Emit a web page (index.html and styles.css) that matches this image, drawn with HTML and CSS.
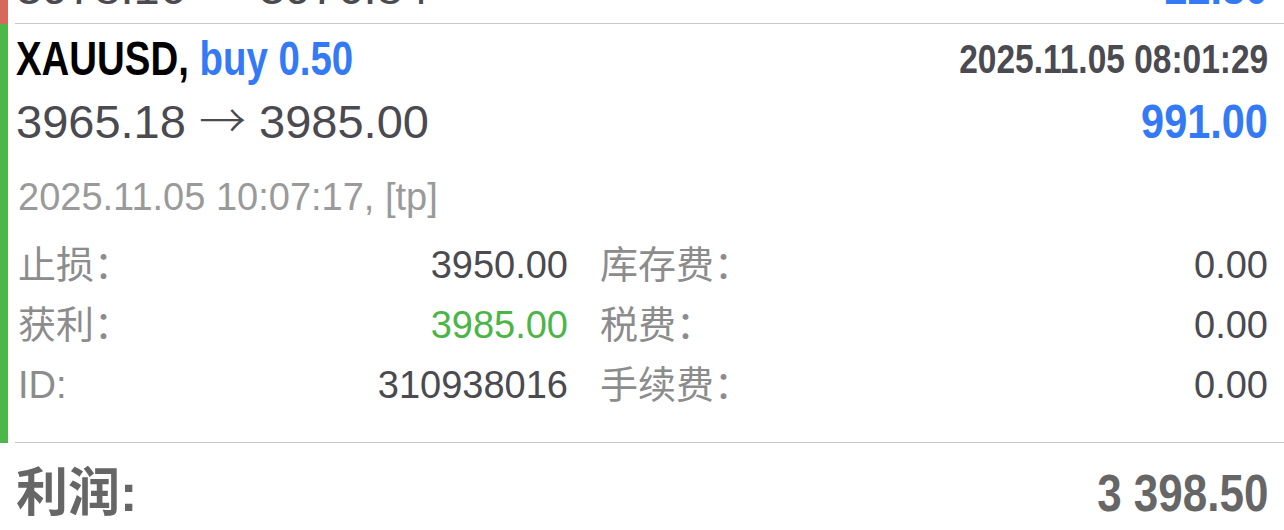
FILE: index.html
```html
<!DOCTYPE html>
<html lang="zh-CN">
<head>
    <meta charset="UTF-8">
    <meta name="viewport" content="width=device-width, initial-scale=1.0">
    <title>历史</title>
    <link rel="stylesheet" href="styles.css">
</head>
<body>
    <!-- 已平仓订单列表（已向下滚动） -->
    <div class="history">
        <div class="trade">
            <div class="marker sell"></div>
            <div class="trade-body">
                <div class="trade-head">
                    <span class="symbol">XAUUSD, <span class="side">sell 0.50</span></span>
                    <span class="open-time">2025.11.05 07:12:40</span>
                </div>
                <div class="trade-price">
                    <span class="prices">3978.16 <span class="arrow">→</span> 3976.84</span>
                    <span class="profit">22.80</span>
                </div>
            </div>
        </div>

        <div class="trade">
            <div class="marker buy"></div>
            <div class="trade-body">
                <div class="trade-head">
                    <span class="symbol">XAUUSD, <span class="side">buy 0.50</span></span>
                    <span class="open-time">2025.11.05 08:01:29</span>
                </div>
                <div class="trade-price">
                    <span class="prices">3965.18 <span class="arrow">→</span> 3985.00</span>
                    <span class="profit">991.00</span>
                </div>
                <div class="close-time">2025.11.05 10:07:17, [tp]</div>

                <div class="details">
                    <div class="detail"><span class="label">止损：</span><span class="value">3950.00</span></div>
                    <div class="detail"><span class="label">库存费：</span><span class="value">0.00</span></div>
                    <div class="detail"><span class="label">获利：</span><span class="value tp">3985.00</span></div>
                    <div class="detail"><span class="label">税费：</span><span class="value">0.00</span></div>
                    <div class="detail"><span class="label">ID:</span><span class="value">310938016</span></div>
                    <div class="detail"><span class="label">手续费：</span><span class="value">0.00</span></div>
                </div>
            </div>
        </div>
    </div>

    <!-- 合计 -->
    <div class="summary">
        <span class="summary-label">利润:</span>
        <span class="summary-value">3 398.50</span>
    </div>
</body>
</html>
```

FILE: styles.css
```css
body {
    margin: 0;
    height: 530px;
    overflow: hidden;
    background: #fff;
    font-family: 'Liberation Sans', 'Noto Sans CJK SC', sans-serif;
    color: #4a4a50;
}

.history {
    margin-top: -110px;
}

.trade {
    display: flex;
}

.marker {
    width: 8px;
    flex-shrink: 0;
}

.marker.sell {
    background-color: #d8685a;
}

.marker.buy {
    background-color: #4db848;
}

.trade-body {
    flex: 1;
    margin-left: 7px;
    padding: 8px 16px 7px 1px;
    border-bottom: 1px solid #c8c8c8;
}

.trade-head,
.trade-price {
    display: flex;
    justify-content: space-between;
    align-items: center;
}

.trade-head {
    line-height: 54px;
}

/* жирный шрифт в приложении узкий, сжимаем по горизонтали */
.symbol,
.open-time,
.profit,
.summary-value {
    display: inline-block;
    font-weight: bold;
}

.symbol {
    font-size: 48px;
    color: #000;
    transform: scaleX(0.8);
    transform-origin: left center;
}

.side {
    color: #3479f6;
}

.open-time {
    font-size: 40px;
    color: #4a4a50;
    transform: scaleX(0.837);
    transform-origin: right center;
}

.trade-price {
    margin-top: 8px;
    line-height: 56px;
}

.prices {
    font-size: 47px;
}

.arrow {
    font-family: 'Noto Sans CJK SC', sans-serif;
    font-weight: 300;
    line-height: 0;
}

.profit {
    font-size: 48px;
    color: #3479f6;
    transform: scaleX(0.863);
    transform-origin: right center;
}

.close-time {
    margin-top: 24px;
    padding-left: 2px;
    font-size: 38px;
    line-height: 46px;
    color: #9a9a9a;
}

.details {
    display: grid;
    grid-template-columns: 552px 1fr;
    column-gap: 30px;
    margin-top: 15px;
    padding-bottom: 20px;
}

.detail {
    display: flex;
    justify-content: space-between;
    font-size: 38px;
    line-height: 60px;
}

.label {
    padding-left: 2px;
    color: #8c8c8c;
}

.value {
    color: #4a4a50;
}

.value.tp {
    color: #4cb547;
}

.summary {
    display: flex;
    justify-content: space-between;
    padding: 20px 16px 0 16px;
    line-height: 60px;
    color: #666;
    font-weight: bold;
}

.summary-label {
    font-size: 52px;
}

.summary-value {
    font-size: 52px;
    transform: scaleX(0.846);
    transform-origin: right center;
}
```
